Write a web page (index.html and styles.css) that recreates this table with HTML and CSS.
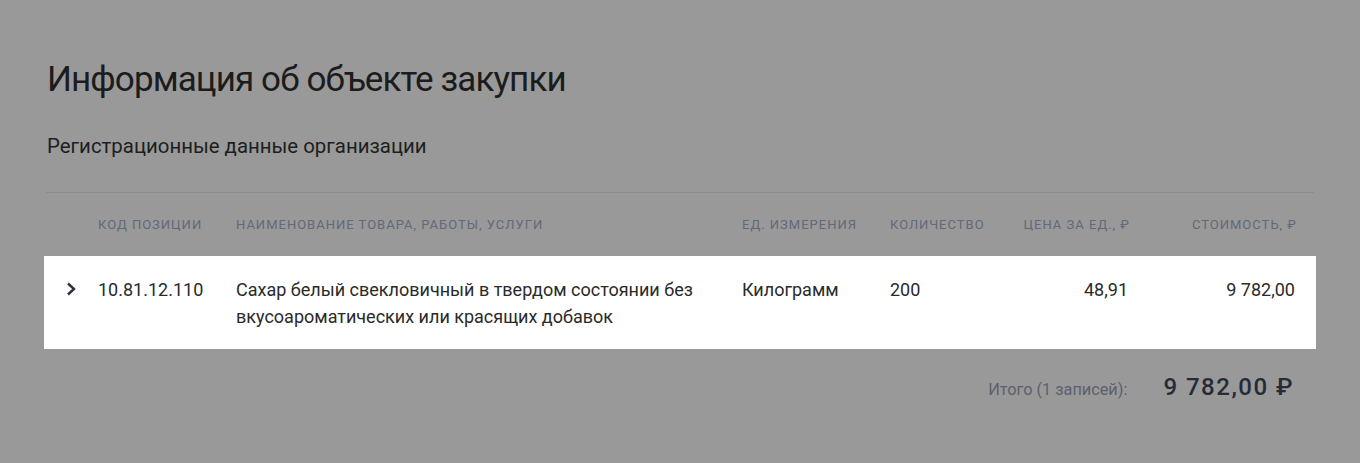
FILE: index.html
```html
<!DOCTYPE html>
<html lang="ru">
<head>
<meta charset="utf-8">
<title>Информация об объекте закупки</title>
<link rel="stylesheet" href="styles.css">
</head>
<body>
<div class="page">
  <h1 class="title">Информация об объекте закупки</h1>
  <h2 class="subtitle">Регистрационные данные организации</h2>
  <div class="table">
    <div class="grid head">
      <div></div>
      <div>Код позиции</div>
      <div>Наименование товара, работы, услуги</div>
      <div>Ед. измерения</div>
      <div>Количество</div>
      <div class="right">Цена за ед., ₽</div>
      <div class="right">Стоимость, ₽</div>
    </div>
    <div class="grid row">
      <div class="chev">
        <svg width="14" height="14" viewBox="0 0 14 14"><path d="M4 1.5 L10 7 L4 12.5" fill="none" stroke="#2b3040" stroke-width="2.4"/></svg>
      </div>
      <div>10.81.12.110</div>
      <div>Сахар белый свекловичный в твердом состоянии без вкусоароматических или красящих добавок</div>
      <div>Килограмм</div>
      <div>200</div>
      <div class="right">48,91</div>
      <div class="right">9 782,00</div>
    </div>
  </div>
  <div class="total">
    <span class="total-label">Итого (1 записей):</span>
    <span class="total-value">9 782,00 ₽</span>
  </div>
</div>
</body>
</html>
```
FILE: styles.css
```css
html, body {
  margin: 0;
  padding: 0;
  background: #999999;
}
body {
  font-family: Roboto, "Noto Sans", sans-serif;
  color: #1e1e1e;
}
.page {
  padding: 52px 44px 0 44px;
}
.title {
  margin: 0 0 0 3px;
  font-size: 35px;
  font-weight: 400;
  letter-spacing: -0.9px;
  line-height: 56px;
  color: #1c1c1c;
}
.subtitle {
  margin: 24px 0 0 3px;
  font-size: 20.4px;
  font-weight: 400;
  line-height: 28px;
  color: #1e1e1e;
}
.table {
  margin-top: 32px;
}
.grid {
  display: grid;
  grid-template-columns: 24px 122px 490px 132px 108px 114px 151px;
  column-gap: 16px;
  padding: 0 21px 0 14px;
}
.head {
  margin: 0 2px;
  padding-left: 12px;
  padding-right: 19px;
  border-top: 1px solid #8b8b8b;
  height: 63px;
  align-items: center;
  font-size: 13px;
  letter-spacing: 1px;
  text-transform: uppercase;
  white-space: nowrap;
  color: #63687a;
}
.head .right {
  margin-right: -2px;
}
.row {
  background: #ffffff;
  padding-top: 20px;
  padding-bottom: 19px;
  font-size: 18px;
  line-height: 27px;
  color: #2a2a2a;
  align-items: start;
}
.right {
  text-align: right;
}
.chev {
  padding-top: 0;
  padding-left: 6px;
}
.total {
  display: flex;
  justify-content: flex-end;
  align-items: baseline;
  gap: 36px;
  padding: 24px 22px 0 0;
}
.total-label {
  font-size: 16.3px;
  color: #5c6070;
}
.total-value {
  font-size: 24px;
  font-weight: 500;
  letter-spacing: 1.5px;
  color: #262b38;
}
```
